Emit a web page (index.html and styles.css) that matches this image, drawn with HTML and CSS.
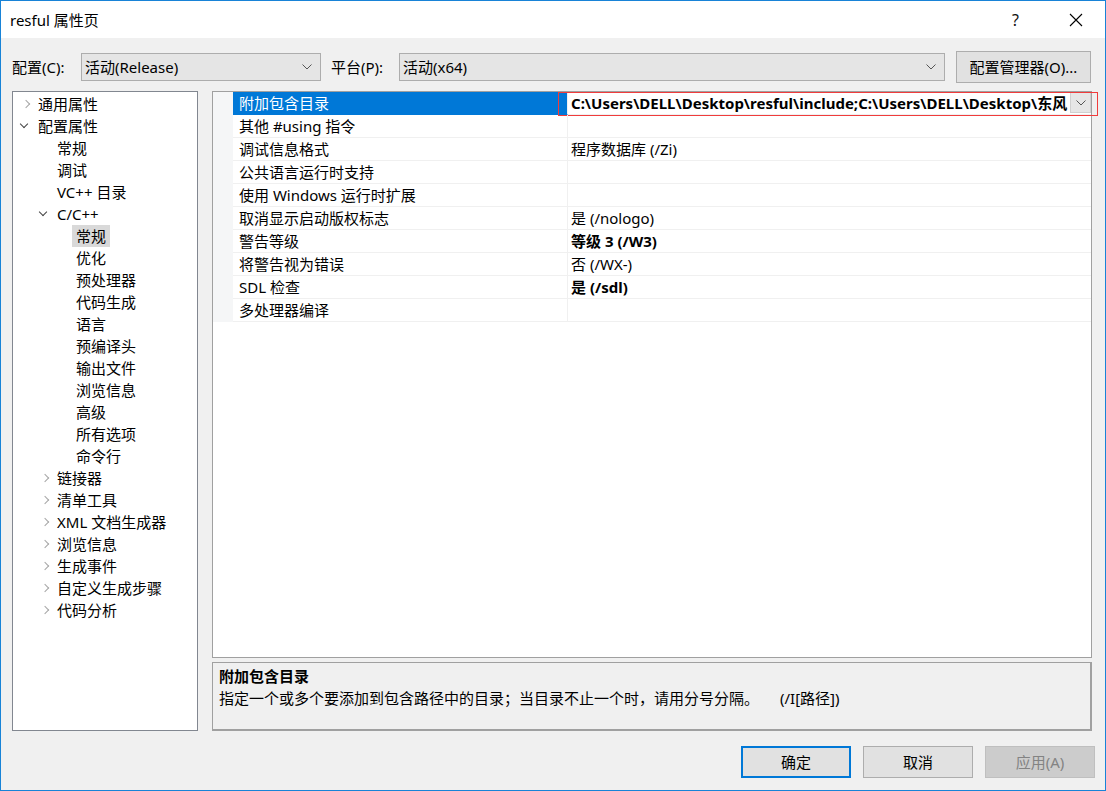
FILE: index.html
```html
<!DOCTYPE html>
<html lang="zh-CN">
<head>
<meta charset="utf-8">
<title>resful 属性页</title>
<link rel="stylesheet" href="styles.css">
</head>
<body>
<div class="window">
  <div class="titlebar">
    <span class="title">resful 属性页</span>
    <span class="help">?</span>
    <span class="close"><svg width="14" height="14" viewBox="0 0 14 14"><path d="M1 1L13 13M13 1L1 13" stroke="#000" stroke-width="1.1" fill="none"/></svg></span>
  </div>

  <div class="toolbar">
    <span class="lbl">配置(C):</span>
    <div class="select sel-config"><span>活动(Release)</span><svg class="chev" width="10" height="6" viewBox="0 0 10 6"><path d="M0.5 0.5L5 5L9.5 0.5" stroke="#555" fill="none"/></svg></div>
    <span class="lbl lbl-platform">平台(P):</span>
    <div class="select sel-platform"><span>活动(x64)</span><svg class="chev" width="10" height="6" viewBox="0 0 10 6"><path d="M0.5 0.5L5 5L9.5 0.5" stroke="#555" fill="none"/></svg></div>
    <div class="btn btn-mgr">配置管理器(O)...</div>
  </div>

  <div class="main">
    <div class="tree">
      <div class="node l0"><span class="arr closed"></span>通用属性</div>
      <div class="node l0"><span class="arr open"></span>配置属性</div>
      <div class="node l1">常规</div>
      <div class="node l1">调试</div>
      <div class="node l1">VC++ 目录</div>
      <div class="node l1"><span class="arr open"></span>C/C++</div>
      <div class="node l2"><span class="sel">常规</span></div>
      <div class="node l2">优化</div>
      <div class="node l2">预处理器</div>
      <div class="node l2">代码生成</div>
      <div class="node l2">语言</div>
      <div class="node l2">预编译头</div>
      <div class="node l2">输出文件</div>
      <div class="node l2">浏览信息</div>
      <div class="node l2">高级</div>
      <div class="node l2">所有选项</div>
      <div class="node l2">命令行</div>
      <div class="node l1"><span class="arr closed"></span>链接器</div>
      <div class="node l1"><span class="arr closed"></span>清单工具</div>
      <div class="node l1"><span class="arr closed"></span>XML 文档生成器</div>
      <div class="node l1"><span class="arr closed"></span>浏览信息</div>
      <div class="node l1"><span class="arr closed"></span>生成事件</div>
      <div class="node l1"><span class="arr closed"></span>自定义生成步骤</div>
      <div class="node l1"><span class="arr closed"></span>代码分析</div>
    </div>

    <div class="right">
      <div class="grid">
        <div class="row active">
          <div class="gut"></div>
          <div class="name">附加包含目录</div>
          <div class="val bold"><span class="vtext">C:\Users\DELL\Desktop\resful\include;C:\Users\DELL\Desktop\东风</span><span class="dd"><svg width="10" height="6" viewBox="0 0 10 6"><path d="M0.5 0.5L5 5L9.5 0.5" stroke="#555" fill="none"/></svg></span></div>
          <div class="redbox"></div>
        </div>
        <div class="row"><div class="gut"></div><div class="name">其他 #using 指令</div><div class="val"></div></div>
        <div class="row"><div class="gut"></div><div class="name">调试信息格式</div><div class="val">程序数据库 (/Zi)</div></div>
        <div class="row"><div class="gut"></div><div class="name">公共语言运行时支持</div><div class="val"></div></div>
        <div class="row"><div class="gut"></div><div class="name">使用 Windows 运行时扩展</div><div class="val"></div></div>
        <div class="row"><div class="gut"></div><div class="name">取消显示启动版权标志</div><div class="val">是 (/nologo)</div></div>
        <div class="row"><div class="gut"></div><div class="name">警告等级</div><div class="val bold">等级 3 (/W3)</div></div>
        <div class="row"><div class="gut"></div><div class="name">将警告视为错误</div><div class="val">否 (/WX-)</div></div>
        <div class="row"><div class="gut"></div><div class="name">SDL 检查</div><div class="val bold">是 (/sdl)</div></div>
        <div class="row"><div class="gut"></div><div class="name">多处理器编译</div><div class="val"></div></div>
      </div>
      <div class="desc">
        <div class="desc-title">附加包含目录</div>
        <div class="desc-text">指定一个或多个要添加到包含路径中的目录；当目录不止一个时，请用分号分隔。<span class="sw">(/I[路径])</span></div>
      </div>
    </div>
  </div>

  <div class="footer">
    <div class="btn fbtn ok">确定</div>
    <div class="btn fbtn">取消</div>
    <div class="btn fbtn disabled">应用(A)</div>
  </div>
</div>
</body>
</html>
```

FILE: styles.css
```css
* { box-sizing: border-box; }
html, body { margin: 0; padding: 0; }
body {
  font-family: "Noto Sans", "Noto Sans CJK SC", sans-serif;
  font-size: 15px;
  color: #000;
  background: #fff;
}
.window {
  width: 1106px;
  height: 791px;
  border: 1px solid #1883d7;
  background: #f0f0f0;
  display: flex;
  flex-direction: column;
  overflow: hidden;
}
.titlebar {
  height: 37px;
  background: #fff;
  display: flex;
  align-items: center;
  padding-left: 9px;
  flex-shrink: 0;
}
.title { flex: 1; font-size: 15px; line-height: 20px; }
.help { width: 14px; font-size: 16px; line-height: 20px; color: #111; margin-right: 43px; }
.close { width: 14px; height: 14px; margin-right: 22px; display: flex; }

.toolbar {
  display: flex;
  align-items: center;
  height: 32px;
  margin-top: 13px;
  padding-left: 11px;
}
.lbl { line-height: 20px; width: 69px; }
.lbl-platform { margin-left: 10px; width: 68px; }
.select {
  height: 28px;
  border: 1px solid #adadad;
  background: #e5e5e5;
  display: flex;
  align-items: center;
  padding-left: 3px;
  padding-right: 8px;
}
.select span { flex: 1; line-height: 20px; }
.sel-config { width: 240px; }
.sel-platform { width: 546px; }
.btn {
  border: 1px solid #adadad;
  background: #e1e1e1;
  display: flex;
  align-items: center;
  justify-content: center;
  line-height: 20px;
}
.btn-mgr { width: 135px; height: 32px; margin-left: 11px; }

.main {
  display: flex;
  margin-top: 8px;
  padding-left: 11px;
  gap: 14px;
  height: 640px;
}
.tree {
  width: 186px;
  height: 640px;
  border: 1px solid #828790;
  background: #fff;
  padding-top: 1px;
}
.node {
  height: 22px;
  line-height: 22px;
  display: flex;
  align-items: center;
  position: relative;
  white-space: nowrap;
}
.l0 { padding-left: 25px; }
.l1 { padding-left: 44px; }
.l2 { padding-left: 63px; }
.arr {
  width: 13px;
  height: 22px;
  margin-left: -13px;
  position: relative;
}
.arr.closed::before {
  content: "";
  position: absolute;
  left: -2px; top: 8px;
  width: 5px; height: 5px;
  border-right: 1.3px solid #a6a6a6;
  border-top: 1.3px solid #a6a6a6;
  transform: rotate(45deg);
}
.arr.open::before {
  content: "";
  position: absolute;
  left: -4px; top: 6px;
  width: 5px; height: 5px;
  border-right: 1.3px solid #444;
  border-bottom: 1.3px solid #444;
  transform: rotate(45deg);
}
.sel {
  background: #d9d9d9;
  padding: 0 4px 0 4px;
  margin-left: -4px;
  line-height: 22px;
  height: 22px;
}

.right {
  width: 880px;
  display: flex;
  flex-direction: column;
  gap: 4px;
}
.grid {
  height: 568px;
  border: 1px solid #a0a0a0;
  background: #fff;
}
.row {
  display: flex;
  height: 23px;
  position: relative;
}
.gut { width: 20px; background: #f5f6f7; }
.name {
  width: 335px;
  padding-left: 6px;
  padding-top: 1px;
  line-height: 21px;
  border-bottom: 1px solid #f0f0f0;
  border-right: 1px solid #f0f0f0;
  white-space: nowrap;
}
.val {
  flex: 1;
  padding-left: 3px;
  line-height: 22px;
  border-bottom: 1px solid #f0f0f0;
  white-space: nowrap;
  overflow: hidden;
  display: flex;
}
.val:not(:empty) { padding-top: 1px; line-height: 21px; }
.bold { font-weight: 700; }
.row.active .name {
  background: #0078d7;
  color: #fff;
  border-bottom-color: #0078d7;
}
.row.active .val { padding-top: 0; line-height: 22px; }
.vtext { flex: 1; overflow: hidden; }
.dd {
  width: 21px;
  height: 21px;
  background: #e6e6e6;
  border: 1px solid #d0d0d0;
  display: flex;
  align-items: center;
  justify-content: center;
}
.redbox {
  position: absolute;
  left: 345px;
  top: 0;
  width: 540px;
  height: 24px;
  border: 1px solid #f03c3c;
  pointer-events: none;
}

.desc {
  height: 69px;
  border: 1px solid #a0a0a0;
  border-bottom: 2px solid #a0a0a0;
  border-right: 2px solid #a0a0a0;
  background: #f0f0f0;
  padding: 2px 0 0 6px;
}
.desc-title { font-weight: 700; line-height: 22px; }
.desc-text { line-height: 23px; }
.sw { margin-left: 21px; }

.footer {
  display: flex;
  justify-content: flex-end;
  gap: 12px;
  margin-top: 15px;
  padding-right: 10px;
}
.fbtn { width: 110px; height: 32px; }
.fbtn.ok { border: 2px solid #0078d7; }
.fbtn.disabled { background: #cccccc; border-color: #bfbfbf; color: #838383; }
```
